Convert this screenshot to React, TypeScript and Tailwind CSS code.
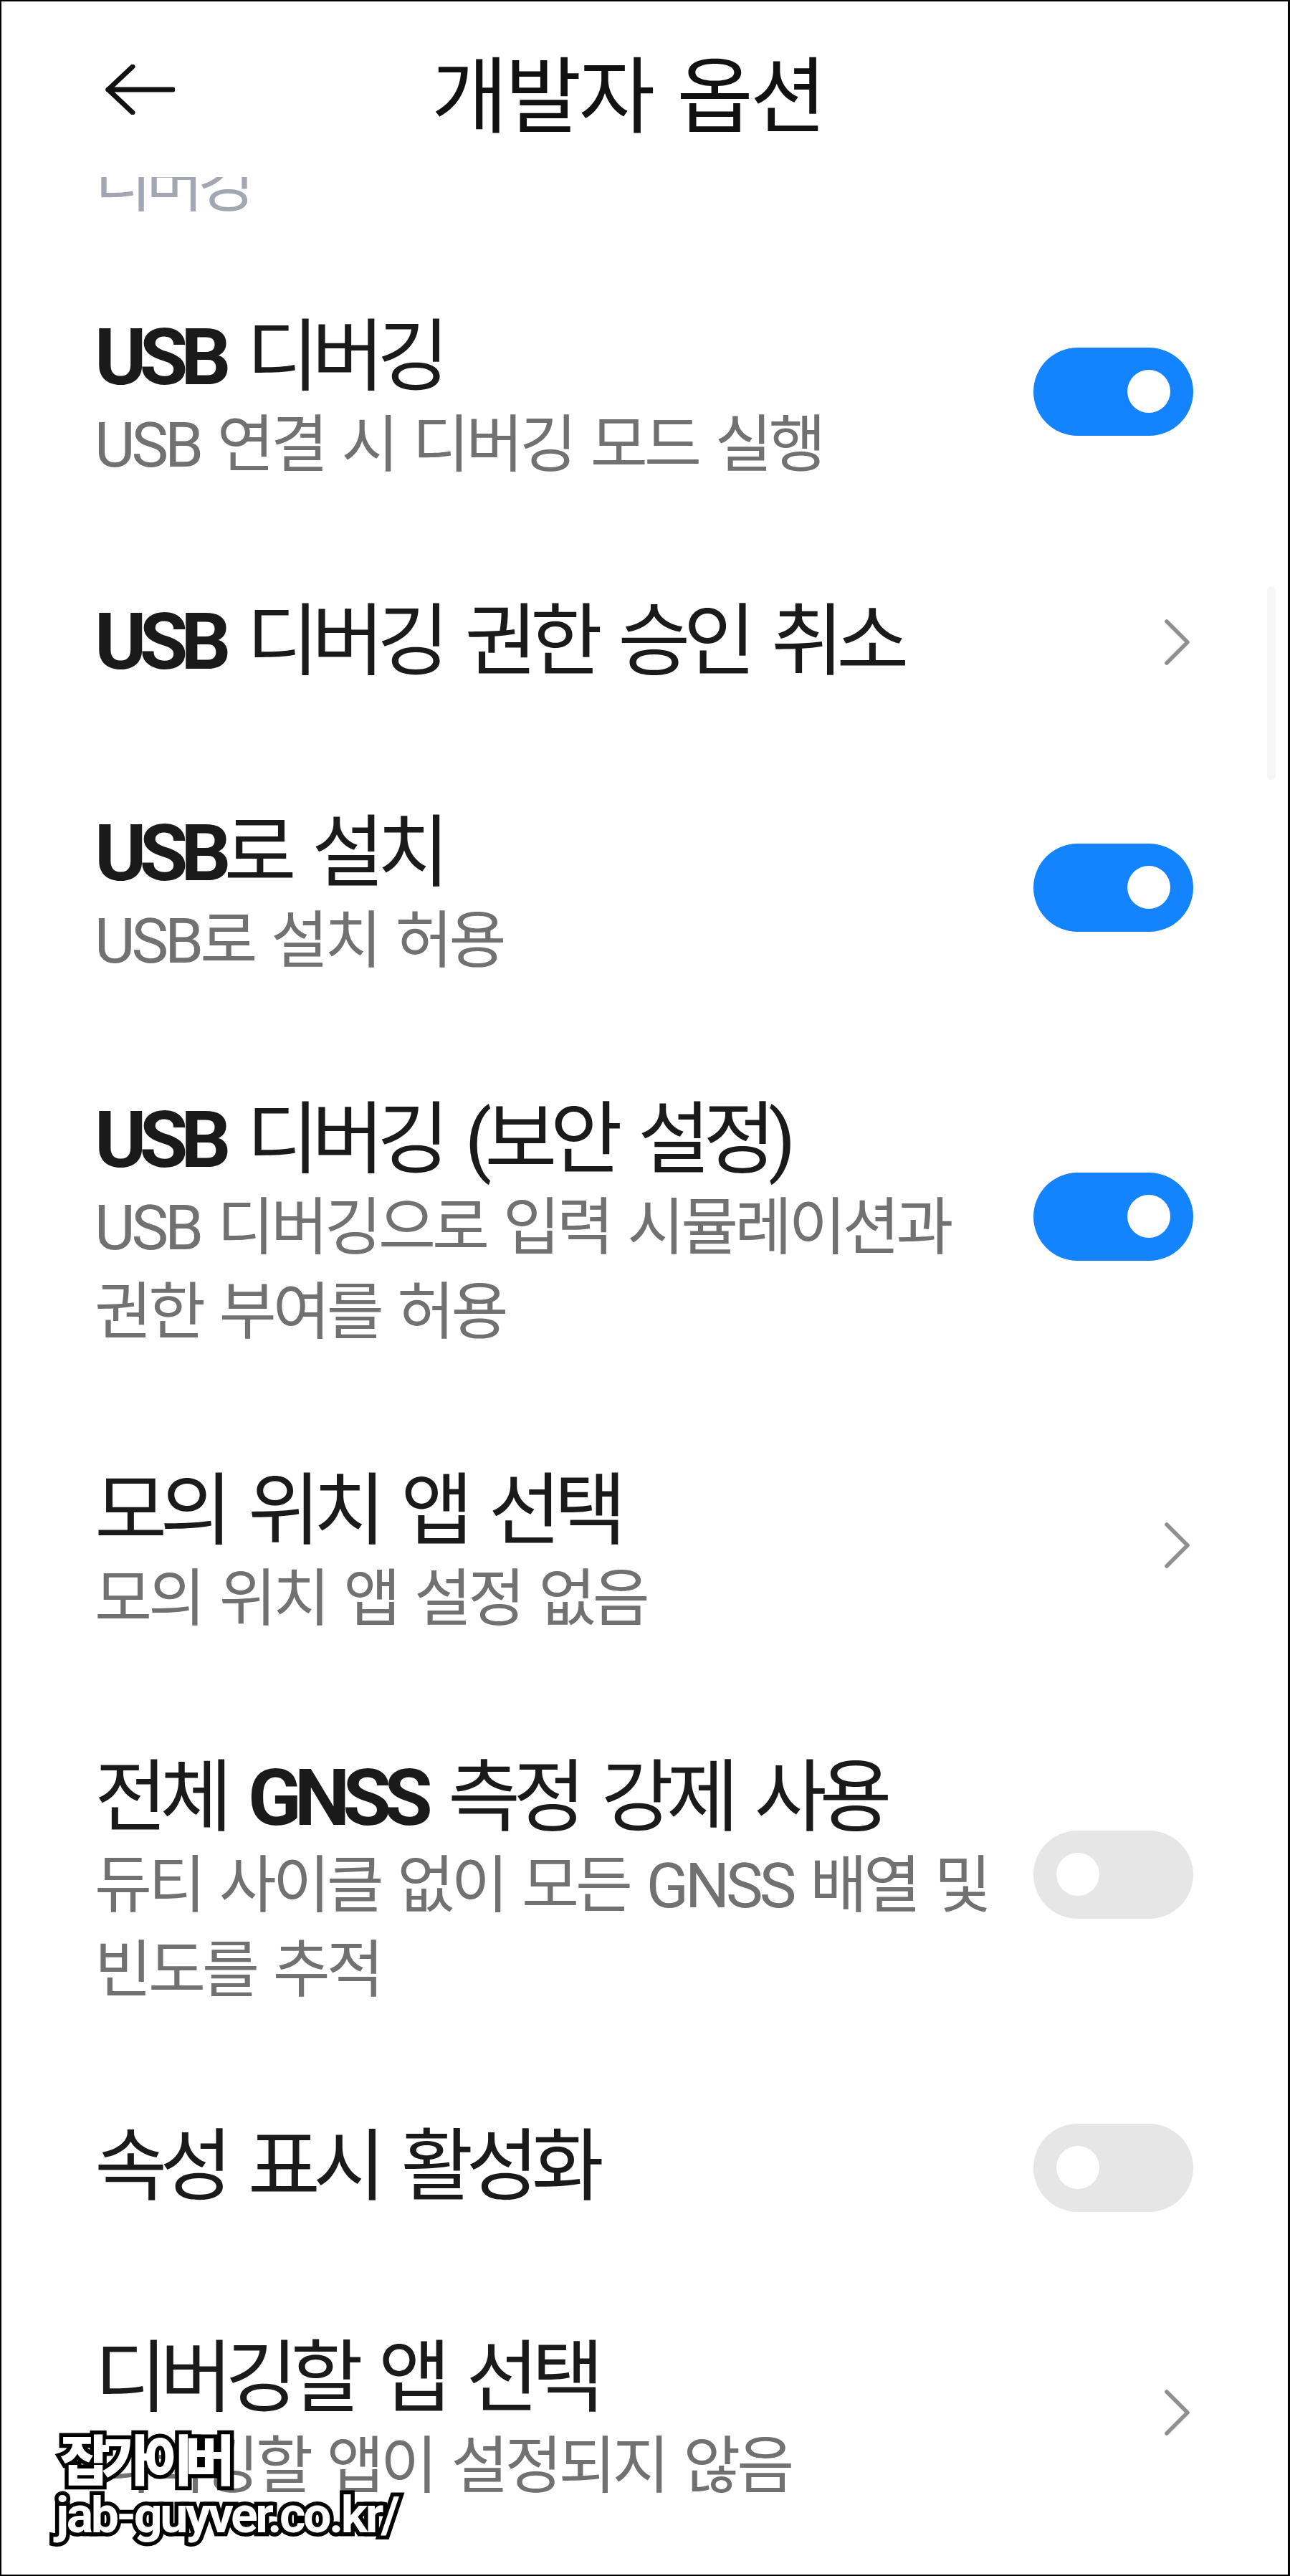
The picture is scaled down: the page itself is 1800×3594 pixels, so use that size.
import React from 'react';

type RightKind = 'on' | 'off' | 'chevron';

interface Row {
  title: string;
  sub?: string[];
  right: RightKind;
}

const rows: Row[] = [
  { title: 'USB 디버깅', sub: ['USB 연결 시 디버깅 모드 실행'], right: 'on' },
  { title: 'USB 디버깅 권한 승인 취소', right: 'chevron' },
  { title: 'USB로 설치', sub: ['USB로 설치 허용'], right: 'on' },
  { title: 'USB 디버깅 (보안 설정)', sub: ['USB 디버깅으로 입력 시뮬레이션과', '권한 부여를 허용'], right: 'on' },
  { title: '모의 위치 앱 선택', sub: ['모의 위치 앱 설정 없음'], right: 'chevron' },
  { title: '전체 GNSS 측정 강제 사용', sub: ['듀티 사이클 없이 모든 GNSS 배열 및', '빈도를 추적'], right: 'off' },
  { title: '속성 표시 활성화', right: 'off' },
  { title: '디버깅할 앱 선택', sub: ['디버깅할 앱이 설정되지 않음'], right: 'chevron' },
];

// 라틴 문자만 굵게 (원본 스크린샷의 폰트 폴백 모양)
const renderTitle = (title: string) =>
  title.split(/([A-Za-z]+)/).map((part, i) =>
    /^[A-Za-z]+$/.test(part) ? (
      <span key={i} className="font-bold">
        {part}
      </span>
    ) : (
      <span key={i}>{part}</span>
    ),
  );

const Toggle = ({ on }: { on: boolean }) => (
  <div
    className={`flex h-[123px] w-[223px] shrink-0 items-center rounded-full px-[32px] ${
      on ? 'justify-end bg-[#1383fe]' : 'justify-start bg-[#e6e6e6]'
    }`}
  >
    <div className="h-[60px] w-[60px] rounded-full bg-white" />
  </div>
);

const Chevron = () => (
  <svg width="40" height="68" viewBox="0 0 40 68" className="mr-[2px] shrink-0" fill="none">
    <path d="M5 5 L34 34 L5 63" stroke="#8f8f8f" strokeWidth="5.5" strokeLinecap="round" strokeLinejoin="round" />
  </svg>
);

const SettingRow = ({ row }: { row: Row }) => {
  const hasSub = !!row.sub;
  return (
    <div
      className={`flex items-center pr-[132px] pl-[130px] ${
        hasSub ? 'pt-[54px] pb-[78px]' : 'h-[292px] pt-[75px] pb-[91px]'
      }`}
    >
      {/* 설명이 있으면 위쪽 여백을 더 줘서 토글이 살짝 위로 오도록 */}
      <div className={`flex-1 ${hasSub ? 'pt-[24px]' : ''}`}>
        <div className="whitespace-nowrap text-[110px] leading-[126px] tracking-[-10px] [word-spacing:14px] text-[#1a1a1a]">
          {renderTitle(row.title)}
        </div>
        {row.sub?.map((line) => (
          <div
            key={line}
            className="whitespace-nowrap text-[87px] leading-[118px] tracking-[-5px] [word-spacing:7px] text-[#717171]"
          >
            {line}
          </div>
        ))}
      </div>
      {row.right === 'chevron' ? <Chevron /> : <Toggle on={row.right === 'on'} />}
    </div>
  );
};

export default function App() {
  return (
    <div className="relative h-[3594px] w-[1800px] overflow-hidden border-t-2 border-r-[3px] border-b-2 border-l-2 border-black bg-white font-['Roboto','Noto_Sans_CJK_KR',sans-serif]">
      {/* 헤더 */}
      <div className="flex h-[245px] items-center pl-[144px]">
        <svg width="98" height="70" viewBox="0 0 98 70" fill="none" className="shrink-0">
          <path d="M5 35 H95" stroke="#111" strokeWidth="7" strokeLinecap="round" />
          <path d="M39 3 L5 35 L39 67" stroke="#111" strokeWidth="7" strokeLinecap="round" strokeLinejoin="round" />
        </svg>
        <span className="ml-[358px] font-['Noto_Sans_CJK_KR',sans-serif] text-[116px] leading-none tracking-[-4px] [word-spacing:12px] text-[#111]">
          개발자 옵션
        </span>
      </div>

      {/* 스크롤되어 가려진 이전 항목 */}
      <div className="flex h-[111px] flex-col justify-end overflow-hidden pb-[41px] pl-[130px]">
        <div className="shrink-0 whitespace-nowrap text-[87px] leading-[118px] tracking-[-8px] text-[#a3a7b4]">디버깅</div>
      </div>

      {/* 설정 목록 */}
      <div className="flex flex-col">
        {rows.map((row) => (
          <SettingRow key={row.title} row={row} />
        ))}
      </div>

      {/* 스크롤 표시 */}
      <div className="absolute top-[816px] left-[1766px] h-[270px] w-[12px] rounded-full bg-[#f6f6f6]" />

      {/* 워터마크 */}
      <div className="absolute top-[3388px] left-[82px] flex flex-col font-['Noto_Sans_CJK_KR',sans-serif] font-black leading-none text-white [paint-order:stroke_fill] [-webkit-text-stroke:11px_#000]">
        <span className="text-[76px] tracking-[-12px]">잡가이버</span>
        <span className="mt-[8px] -ml-[6px] font-['Roboto',sans-serif] text-[70px] font-bold tracking-[-3.5px]">
          jab-guyver.co.kr/
        </span>
      </div>
    </div>
  );
}
